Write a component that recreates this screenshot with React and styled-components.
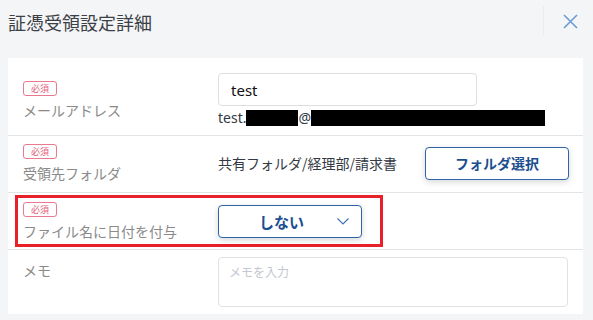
import React from "react";
import styled, { createGlobalStyle } from "styled-components";

const Global = createGlobalStyle`
  html, body { margin: 0; padding: 0; background: #f4f5f7; }
  body { font-family: "Noto Sans", "Noto Sans CJK JP", sans-serif; }
  * { box-sizing: border-box; }
`;

const Page = styled.div`
  width: 593px;
  height: 320px;
  background: #f4f5f7;
  display: flex;
  flex-direction: column;
`;

const Header = styled.header`
  height: 58px;
  flex: 0 0 58px;
  display: flex;
  align-items: center;
  padding: 0 15px 0 8px;
`;

const Title = styled.h1`
  flex: 1;
  margin: 0;
  margin-top: -14px;
  font-size: 18px;
  font-weight: 400;
  line-height: 24px;
  color: #3b3f46;
  font-family: "Noto Sans CJK JP", sans-serif;
`;

const Divider = styled.div`
  width: 1px;
  height: 29px;
  margin-top: -18px;
  background: #e9ebee;
  margin-right: 19px;
`;

const CloseButton = styled.button`
  border: 0;
  background: none;
  padding: 0;
  width: 15px;
  height: 15px;
  margin-top: -16px;
  display: flex;
  cursor: pointer;
`;

const Card = styled.section`
  margin: 0 10px 0 8px;
  background: #fff;
  height: 256px;
  display: flex;
  flex-direction: column;
`;

const Row = styled.div`
  display: flex;
  align-items: ${(p) => (p.$top ? "flex-start" : "stretch")};
  height: ${(p) => p.$h}px;
  flex: 0 0 ${(p) => p.$h}px;
  padding: ${(p) => p.$pad};
  padding-left: 7px;
  padding-right: 15px;
  border-bottom: ${(p) => (p.$last ? "none" : "1px solid #e3e4e6")};
`;

const Group = styled.div`
  display: flex;
  align-items: ${(p) => (p.$top ? "flex-start" : "center")};
  border: 3px solid ${(p) => (p.$highlight ? "#e8202a" : "transparent")};
  padding: ${(p) => (p.$highlight ? "3px 18px 3px 5px" : "0 0 0 5px")};
  flex: ${(p) => (p.$highlight ? "0 0 auto" : "1")};
  margin: ${(p) => (p.$highlight ? "0" : "-3px 0")};
`;

const LabelCol = styled.div`
  width: 195px;
  flex: 0 0 195px;
  display: flex;
  flex-direction: column;
  align-items: flex-start;
  gap: 4px;
  padding-top: ${(p) => p.$offset || 0}px;
`;

const Badge = styled.span`
  display: inline-flex;
  align-items: center;
  justify-content: center;
  width: 34px;
  height: 15px;
  border: 1px solid #ea7890;
  border-radius: 3px;
  color: #e4607c;
  font-size: 9px;
  line-height: 1;
  font-family: "Noto Sans CJK JP", sans-serif;
`;

const Label = styled.span`
  font-size: 14px;
  line-height: 20px;
  height: 20px;
  color: #8a8a8a;
  font-family: "Noto Sans CJK JP", sans-serif;
  white-space: nowrap;
`;

const Control = styled.div`
  flex: 1;
  display: flex;
  flex-direction: ${(p) => (p.$column ? "column" : "row")};
  align-items: ${(p) => (p.$column ? "flex-start" : "center")};
  gap: ${(p) => p.$gap || 0}px;
`;

const TextInput = styled.input`
  display: block;
  width: 259px;
  height: 33px;
  margin: 0;
  border: 1px solid #dedfe2;
  border-radius: 4px;
  padding: 0 12px;
  font-size: 15px;
  color: #111;
  font-family: "Noto Sans", "Noto Sans CJK JP", sans-serif;
  outline: none;
`;

const EmailLine = styled.div`
  display: flex;
  align-items: center;
  height: 20px;
  line-height: 20px;
  font-size: 14px;
  color: #333a44;
  font-family: "Noto Sans", sans-serif;
`;

const Redact = styled.span`
  display: inline-block;
  height: 16px;
  background: #000;
  width: ${(p) => p.$w}px;
`;

const PathText = styled.span`
  font-size: 14px;
  line-height: 20px;
  color: #333a44;
  font-family: "Noto Sans CJK JP", sans-serif;
  white-space: nowrap;
  width: 207px;
`;

const OutlineButton = styled.button`
  width: 144px;
  height: 33px;
  margin: 0;
  background: #fff;
  border: 1px solid #2d64a8;
  border-radius: 4px;
  box-shadow: 0 2px 6px rgba(0, 0, 0, 0.16);
  color: #1b4e90;
  font-weight: 700;
  font-size: 14px;
  font-family: "Noto Sans CJK JP", sans-serif;
  display: flex;
  align-items: center;
  justify-content: ${(p) => (p.$select ? "space-between" : "center")};
  padding: ${(p) => (p.$select ? "0 12px 0 40px" : "0")};
  cursor: pointer;
`;

const SelectText = styled.span`
  font-size: 15px;
`;

const MemoBox = styled.textarea`
  display: block;
  margin: 0;
  width: 350px;
  height: 50px;
  border: 1px solid #e1e2e4;
  border-radius: 4px;
  padding: 5px 10px;
  resize: none;
  font-size: 12px;
  font-family: "Noto Sans CJK JP", sans-serif;
  outline: none;
  &::placeholder { color: #c3c7d0; }
`;

export default function App() {
  return (
    <>
      <Global />
      <Page>
        <Header>
          <Title>証憑受領設定詳細</Title>
          <Divider />
          <CloseButton aria-label="閉じる">
            <svg width="15" height="15" viewBox="0 0 15 15">
              <path d="M1 1L14 14M14 1L1 14" stroke="#6b9cd3" strokeWidth="1.6" fill="none" />
            </svg>
          </CloseButton>
        </Header>
        <Card>
          <Row $h={78} $pad="15px 0 7px">
            <Group>
              <LabelCol>
                <Badge>必須</Badge>
                <Label>メールアドレス</Label>
              </LabelCol>
              <Control $column $gap={2}>
                <TextInput defaultValue="test" />
                <EmailLine>
                  test.<Redact $w={52} />@<Redact $w={234} />
                </EmailLine>
              </Control>
            </Group>
          </Row>
          <Row $h={57} $pad="10px 0 12px">
            <Group>
              <LabelCol>
                <Badge>必須</Badge>
                <Label>受領先フォルダ</Label>
              </LabelCol>
              <Control>
                <PathText>共有フォルダ/経理部/請求書</PathText>
                <OutlineButton>フォルダ選択</OutlineButton>
              </Control>
            </Group>
          </Row>
          <Row $h={57} $pad="2px 0 2px">
            <Group $highlight>
              <LabelCol>
                <Badge>必須</Badge>
                <Label>ファイル名に日付を付与</Label>
              </LabelCol>
              <Control>
                <OutlineButton $select>
                  <SelectText>しない</SelectText>
                  <svg width="12" height="7" viewBox="0 0 12 7">
                    <path d="M0.5 0.5L6 6L11.5 0.5" stroke="#3d6fb0" strokeWidth="1.1" fill="none" />
                  </svg>
                </OutlineButton>
              </Control>
            </Group>
          </Row>
          <Row $h={64} $pad="7px 0 6px" $last $top>
            <Group $top>
              <LabelCol $offset={3}>
                <Label>メモ</Label>
              </LabelCol>
              <Control>
                <MemoBox placeholder="メモを入力" />
              </Control>
            </Group>
          </Row>
        </Card>
      </Page>
    </>
  );
}
